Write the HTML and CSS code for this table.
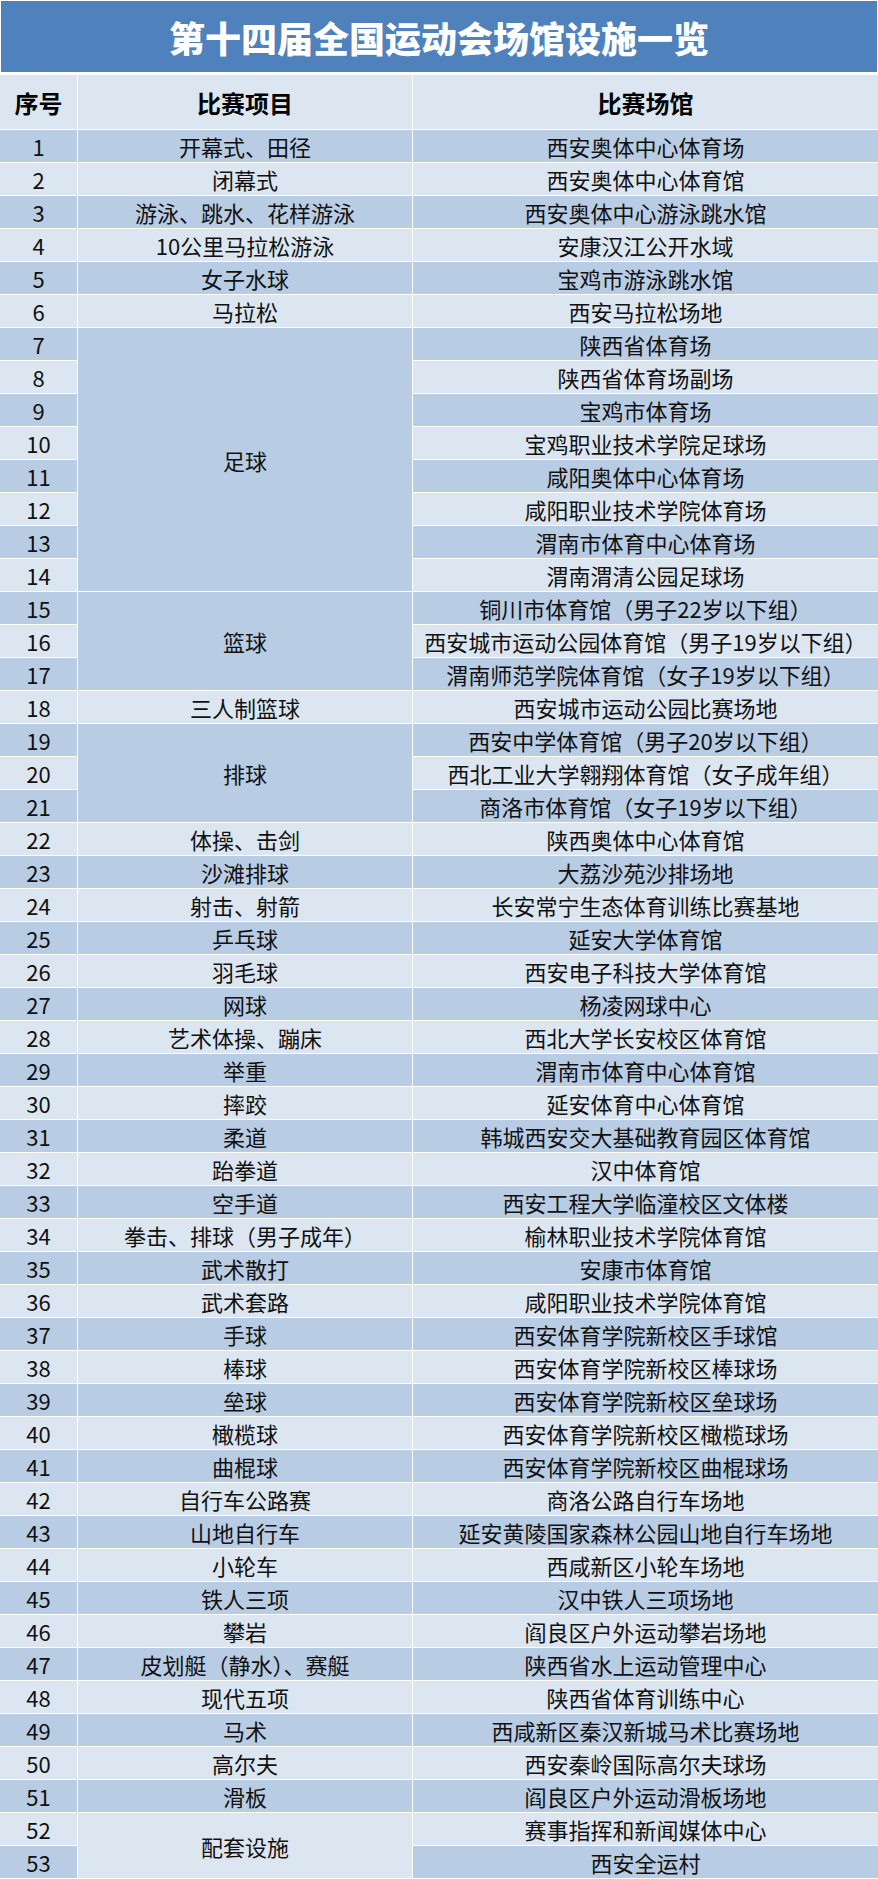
FILE: index.html
```html
<!DOCTYPE html>
<html lang="zh-CN">
<head>
<meta charset="utf-8">
<title>第十四届全国运动会场馆设施一览</title>
<link rel="stylesheet" href="styles.css">
</head>
<body>
<div class="page">
  <h1 class="title">第十四届全国运动会场馆设施一览</h1>
  <div class="table">
    <div class="th">序号</div><div class="th">比赛项目</div><div class="th">比赛场馆</div>

    <div class="c d">1</div><div class="c d">开幕式、田径</div><div class="c d">西安奥体中心体育场</div>
    <div class="c l">2</div><div class="c l">闭幕式</div><div class="c l">西安奥体中心体育馆</div>
    <div class="c d">3</div><div class="c d">游泳、跳水、花样游泳</div><div class="c d">西安奥体中心游泳跳水馆</div>
    <div class="c l">4</div><div class="c l">10公里马拉松游泳</div><div class="c l">安康汉江公开水域</div>
    <div class="c d">5</div><div class="c d">女子水球</div><div class="c d">宝鸡市游泳跳水馆</div>
    <div class="c l">6</div><div class="c l">马拉松</div><div class="c l">西安马拉松场地</div>

    <div class="c d">7</div><div class="c d span8">足球</div><div class="c d">陕西省体育场</div>
    <div class="c l">8</div><div class="c l">陕西省体育场副场</div>
    <div class="c d">9</div><div class="c d">宝鸡市体育场</div>
    <div class="c l">10</div><div class="c l">宝鸡职业技术学院足球场</div>
    <div class="c d">11</div><div class="c d">咸阳奥体中心体育场</div>
    <div class="c l">12</div><div class="c l">咸阳职业技术学院体育场</div>
    <div class="c d">13</div><div class="c d">渭南市体育中心体育场</div>
    <div class="c l">14</div><div class="c l">渭南渭清公园足球场</div>

    <div class="c d">15</div><div class="c d span3">篮球</div><div class="c d">铜川市体育馆（男子22岁以下组）</div>
    <div class="c l">16</div><div class="c l">西安城市运动公园体育馆（男子19岁以下组）</div>
    <div class="c d">17</div><div class="c d">渭南师范学院体育馆（女子19岁以下组）</div>

    <div class="c l">18</div><div class="c l">三人制篮球</div><div class="c l">西安城市运动公园比赛场地</div>

    <div class="c d">19</div><div class="c d span3">排球</div><div class="c d">西安中学体育馆（男子20岁以下组）</div>
    <div class="c l">20</div><div class="c l">西北工业大学翱翔体育馆（女子成年组）</div>
    <div class="c d">21</div><div class="c d">商洛市体育馆（女子19岁以下组）</div>

    <div class="c l">22</div><div class="c l">体操、击剑</div><div class="c l">陕西奥体中心体育馆</div>
    <div class="c d">23</div><div class="c d">沙滩排球</div><div class="c d">大荔沙苑沙排场地</div>
    <div class="c l">24</div><div class="c l">射击、射箭</div><div class="c l">长安常宁生态体育训练比赛基地</div>
    <div class="c d">25</div><div class="c d">乒乓球</div><div class="c d">延安大学体育馆</div>
    <div class="c l">26</div><div class="c l">羽毛球</div><div class="c l">西安电子科技大学体育馆</div>
    <div class="c d">27</div><div class="c d">网球</div><div class="c d">杨凌网球中心</div>
    <div class="c l">28</div><div class="c l">艺术体操、蹦床</div><div class="c l">西北大学长安校区体育馆</div>
    <div class="c d">29</div><div class="c d">举重</div><div class="c d">渭南市体育中心体育馆</div>
    <div class="c l">30</div><div class="c l">摔跤</div><div class="c l">延安体育中心体育馆</div>
    <div class="c d">31</div><div class="c d">柔道</div><div class="c d">韩城西安交大基础教育园区体育馆</div>
    <div class="c l">32</div><div class="c l">跆拳道</div><div class="c l">汉中体育馆</div>
    <div class="c d">33</div><div class="c d">空手道</div><div class="c d">西安工程大学临潼校区文体楼</div>
    <div class="c l">34</div><div class="c l">拳击、排球（男子成年）</div><div class="c l">榆林职业技术学院体育馆</div>
    <div class="c d">35</div><div class="c d">武术散打</div><div class="c d">安康市体育馆</div>
    <div class="c l">36</div><div class="c l">武术套路</div><div class="c l">咸阳职业技术学院体育馆</div>
    <div class="c d">37</div><div class="c d">手球</div><div class="c d">西安体育学院新校区手球馆</div>
    <div class="c l">38</div><div class="c l">棒球</div><div class="c l">西安体育学院新校区棒球场</div>
    <div class="c d">39</div><div class="c d">垒球</div><div class="c d">西安体育学院新校区垒球场</div>
    <div class="c l">40</div><div class="c l">橄榄球</div><div class="c l">西安体育学院新校区橄榄球场</div>
    <div class="c d">41</div><div class="c d">曲棍球</div><div class="c d">西安体育学院新校区曲棍球场</div>
    <div class="c l">42</div><div class="c l">自行车公路赛</div><div class="c l">商洛公路自行车场地</div>
    <div class="c d">43</div><div class="c d">山地自行车</div><div class="c d">延安黄陵国家森林公园山地自行车场地</div>
    <div class="c l">44</div><div class="c l">小轮车</div><div class="c l">西咸新区小轮车场地</div>
    <div class="c d">45</div><div class="c d">铁人三项</div><div class="c d">汉中铁人三项场地</div>
    <div class="c l">46</div><div class="c l">攀岩</div><div class="c l">阎良区户外运动攀岩场地</div>
    <div class="c d">47</div><div class="c d">皮划艇（静水）、赛艇</div><div class="c d">陕西省水上运动管理中心</div>
    <div class="c l">48</div><div class="c l">现代五项</div><div class="c l">陕西省体育训练中心</div>
    <div class="c d">49</div><div class="c d">马术</div><div class="c d">西咸新区秦汉新城马术比赛场地</div>
    <div class="c l">50</div><div class="c l">高尔夫</div><div class="c l">西安秦岭国际高尔夫球场</div>
    <div class="c d">51</div><div class="c d">滑板</div><div class="c d">阎良区户外运动滑板场地</div>

    <div class="c l">52</div><div class="c l span2">配套设施</div><div class="c l">赛事指挥和新闻媒体中心</div>
    <div class="c d">53</div><div class="c d">西安全运村</div>
  </div>
</div>
</body>
</html>
```

FILE: styles.css
```css
html, body {
  margin: 0;
  padding: 0;
  background: #ffffff;
}

.page {
  width: 878px;
  font-family: "Noto Sans CJK SC", "Noto Sans", sans-serif;
  color: #111111;
}

.title {
  margin: 1px 1px 0 1px;
  height: 71px;
  background: #4f81bd;
  color: #ffffff;
  font-size: 36px;
  font-weight: 900;
  display: flex;
  align-items: center;
  justify-content: center;
  letter-spacing: 0;
  line-height: 1;
}

.table {
  margin-top: 3px;
  display: grid;
  grid-template-columns: 77px 334px 1fr;
  grid-template-rows: 54px;
  grid-auto-rows: 32px;
  gap: 1px;
  background: #ffffff;
}

.th {
  background: #dce6f1;
  font-size: 24px;
  font-weight: 700;
  color: #000000;
  display: flex;
  align-items: center;
  justify-content: center;
}

.c {
  font-size: 22px;
  display: flex;
  align-items: center;
  justify-content: center;
  white-space: nowrap;
  line-height: 1;
}

.d { background: #b8cce4; }
.l { background: #dce6f1; }

.span8 { grid-row: span 8; }
.span3 { grid-row: span 3; }
.span2 { grid-row: span 2; }
```
